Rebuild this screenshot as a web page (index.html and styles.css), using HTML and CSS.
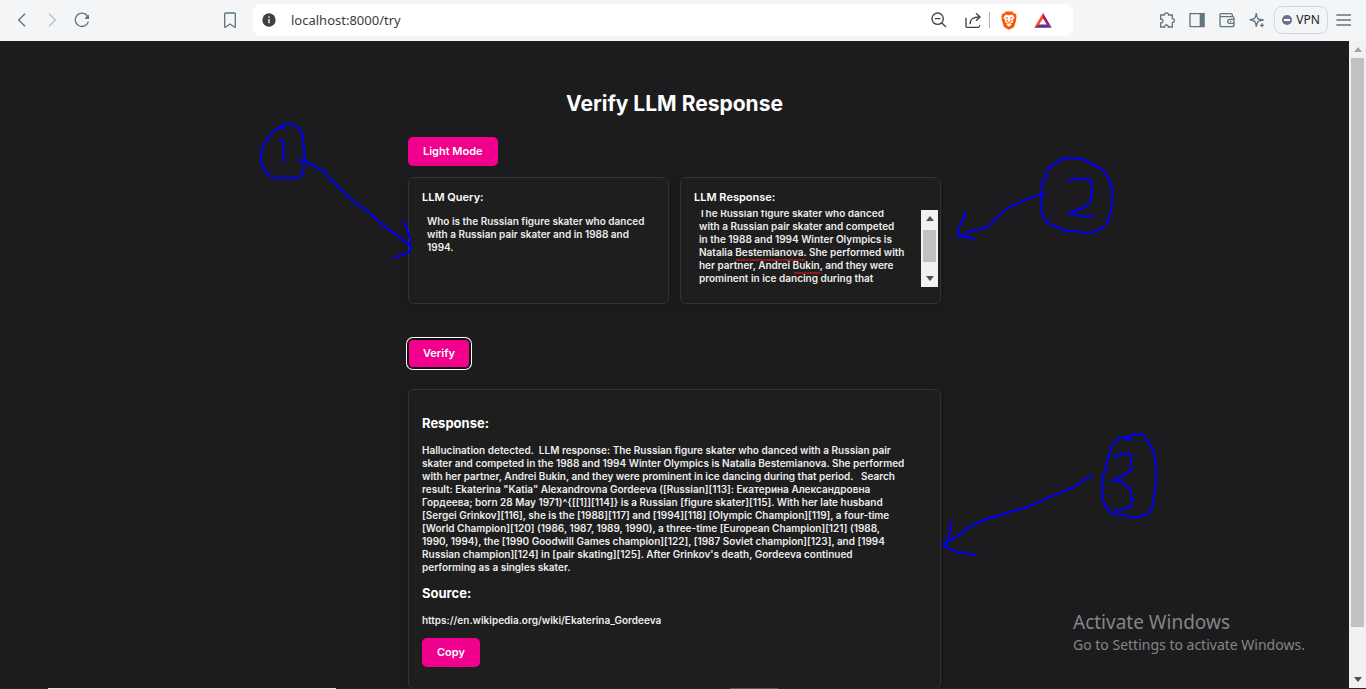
FILE: index.html
```html
<!DOCTYPE html>
<html lang="en">
<head>
<meta charset="utf-8">
<title>Verify LLM Response</title>
<link rel="stylesheet" href="styles.css">
</head>
<body>
<header class="toolbar">
  <button class="tool" aria-label="Back"><svg class="icon" viewBox="0 0 48 48"><path d="M33 5 14 24l19 19"/></svg></button>
  <button class="tool faded" aria-label="Forward"><svg class="icon" viewBox="0 0 48 48"><path d="M15 5l19 19-19 19"/></svg></button>
  <button class="tool" aria-label="Reload"><svg class="icon" viewBox="0 0 48 48"><path d="M43 29A20 20 0 1 1 41 13"/><path class="solid" d="M45 8v13H32l4-7z"/></svg></button>
  <button class="tool bookmark" aria-label="Bookmark"><svg class="icon" viewBox="0 0 48 48"><path d="M8 6q0-3 3-3h26q3 0 3 3v38q0 3-3 1L24 36 11 45q-3 2-3-1z"/></svg></button>
  <div class="address">
    <svg class="icon dark" viewBox="0 0 48 48"><circle class="solid" cx="24" cy="24" r="20"/><path stroke="#fff" stroke-width="4" d="M24 21v13M24 13v4"/></svg>
    <input class="url" type="text" aria-label="Address" value="localhost:8000/try">
    <button class="tool wide dark" aria-label="Zoom out"><svg class="icon" viewBox="0 0 48 48"><circle cx="20" cy="20" r="17"/><path d="M32 32l13 13M12 20h16"/></svg></button>
    <button class="tool wide dark divided" aria-label="Share"><svg class="icon" viewBox="0 0 48 48"><path d="M3 17v26q0 3 3 3h34q4 0 4-6M15 37c0-15 7-22 28-22M33 4l12 11-12 11"/></svg></button>
    <button class="tool wide" aria-label="Shields"><svg class="shield" viewBox="0 0 48 56"><path fill="#ff5500" d="M14 1h20l5 6 5 1 3 8-2 5 1 4-6 20q-1 3-3 4L24 56 11 49q-2-1-3-4L2 25l1-4-2-5 3-8 5-1z"/><path fill="#fff" d="M24 12l10-2 7 9-6 9 1 5-8 4 4 4-8 6-8-6 4-4-8-4 1-5-6-9 7-9z"/><path fill="none" stroke="#ff5500" stroke-width="3" d="M14 19l7 2M34 19l-7 2M20 25l-3 5 7 4 7-4-3-5M24 34v4"/></svg></button>
    <button class="tool wide" aria-label="Rewards"><svg class="bat" viewBox="0 0 54 46"><path fill="#ff4724" d="M27 0 0 45l15-9 12-20z"/><path fill="#9e1f63" d="M27 0l27 45-15-9-12-20z"/><path fill="#662d91" d="M0 45h54l-15-10H15z"/></svg></button>
  </div>
  <button class="tool" aria-label="Extensions"><svg class="icon" viewBox="0 0 48 48"><path d="M6 9h10c-1-8 14-8 13 0h11v11c8-1 8 12 0 12v13H28c1-8-12-8-11 0H5V33c9 1 9-13 0-12V9z"/></svg></button>
  <button class="tool" aria-label="Sidebar"><svg class="icon" viewBox="0 0 48 48"><path d="M3 5h42v39H3z"/><path class="solid" d="M32 4h14v41H32z"/></svg></button>
  <button class="tool" aria-label="Wallet"><svg class="icon" viewBox="0 0 48 48"><path d="M40 14V9q0-4-4-4H7q-4 0-4 4v29q0 6 6 6h30q6 0 6-6V19q0-5-5-5H4M44 22H32q-6 0-6 6t6 6h12M33 28h4"/></svg></button>
  <button class="tool" aria-label="Assistant"><svg class="icon" viewBox="0 0 48 48"><path d="M22 3q2 15 5 17 2 2 17 4-12 1-16 4-4 4-6 16-2-13-5-16-3-2-15-5 12-1 15-4t5-16zM39 34v12M33 40h12"/></svg></button>
  <button class="vpn"><span class="vpn-mark"></span>VPN</button>
  <button class="menu" aria-label="Menu"><svg class="icon" viewBox="0 0 48 48"><path d="M1 9h44M1 24h44M1 39h44"/></svg></button>
</header>

<div class="viewport">
  <main class="page">
    <div class="column">
      <h1 class="title">Verify LLM Response</h1>
      <button class="button">Light Mode</button>
      <div class="pair">
        <section class="card">
          <label class="label" for="query">LLM Query:</label>
          <textarea class="field" id="query" spellcheck="false">Who is the Russian figure skater who danced
with a Russian pair skater and in 1988 and
1994.</textarea>
        </section>
        <section class="card">
          <label class="label" for="answer">LLM Response:</label>
          <div class="scroll-field">
            <textarea class="field" id="answer" spellcheck="false">The Russian figure skater who danced
with a Russian pair skater and competed
in the 1988 and 1994 Winter Olympics is
Natalia Bestemianova. She performed with
her partner, Andrei Bukin, and they were
prominent in ice dancing during that

period.</textarea>
            <div class="scrollbar">
              <svg class="arrow" viewBox="0 0 17 17"><path d="M5 11h8L9 6z"/></svg>
              <div class="thumb thumb-small"></div>
              <svg class="arrow" viewBox="0 0 17 17"><path d="M5 6h8l-4 5z"/></svg>
            </div>
            <span class="squiggle squiggle-a"></span>
            <span class="squiggle squiggle-b"></span>
          </div>
        </section>
      </div>
      <button class="button focused">Verify</button>
      <section class="card result">
        <h2 class="heading">Response:</h2>
        <p class="text">Hallucination detected.&nbsp; LLM response: The Russian figure skater who danced with a Russian pair<br>
          skater and competed in the 1988 and 1994 Winter Olympics is Natalia Bestemianova. She performed<br>
          with her partner, Andrei Bukin, and they were prominent in ice dancing during that period.&nbsp;&nbsp; Search<br>
          result: Ekaterina "Katia" Alexandrovna Gordeeva ([Russian][113]: Екатерина Александровна<br>
          Гордеева; born 28 May 1971)^{[[1]][114]} is a Russian [figure skater][115]. With her late husband<br>
          [Sergei Grinkov][116], she is the [1988][117] and [1994][118] [Olympic Champion][119], a four-time<br>
          [World Champion][120] (1986, 1987, 1989, 1990), a three-time [European Champion][121] (1988,<br>
          1990, 1994), the [1990 Goodwill Games champion][122], [1987 Soviet champion][123], and [1994<br>
          Russian champion][124] in [pair skating][125]. After Grinkov's death, Gordeeva continued<br>
          performing as a singles skater.</p>
        <h2 class="heading">Source:</h2>
        <p class="text">https://en.wikipedia.org/wiki/Ekaterina_Gordeeva</p>
        <button class="button">Copy</button>
      </section>
    </div>
  </main>
  <div class="scrollbar page-scroll">
    <svg class="arrow idle" viewBox="0 0 17 17"><path d="M5 11h8L9 6z"/></svg>
    <div class="thumb thumb-page"></div>
    <svg class="arrow" viewBox="0 0 17 17"><path d="M5 6h8l-4 5z"/></svg>
  </div>
</div>
<footer class="edge"><span class="edge-light"></span><span class="edge-gray"></span></footer>

<aside class="watermark">
  <p class="watermark-title">Activate Windows</p>
  <p class="watermark-text">Go to Settings to activate Windows.</p>
</aside>

<svg class="ink" width="1366" height="689" viewBox="0 0 1366 689" aria-hidden="true">
  <g transform="translate(250 80) scale(.3333)">
    <path d="M101 146 91 140 104 133 128 132 145 145 158 165 161 200 164 235 160 275 150 290 130 295 75 294 58 287 38 262 32 235 35 208 50 178 70 155 95 138M91 179l8 2 2 14v50"/>
    <path d="M141 241h24l23 15 37 20 13 19 20 17 32 34 35 29 40 29 35 32 40 29 36 29M461 425l9 20 6 23 5 12-1 32-14 11-33 9"/>
  </g>
  <g transform="translate(950 150) scale(.3333)">
    <path d="M277 133 276 97 288 80 294 55 338 25 395 26 425 42 440 47 463 67 480 93 487 125 484 170 476 212 455 235 430 248 400 248 340 241 325 232 298 222 281 204 274 180 273 133M353 91l33-5h26l12 9 3 25-5 33-15 17-25 10-27 9 40 9 36 2"/>
    <path d="M285 133h-15l-55 21-50 25-25 26-28 25-15 7-35 5-26 14M46 187l-9 26-10 20-4 26 33 2 18 8"/>
  </g>
  <g transform="translate(930 420) scale(.3333)">
    <path d="M604 60 598 53 590 60 589 51 570 53 551 69 543 84 541 97 535 106 528 145 520 165 516 200 519 240 530 265 545 281 580 286 597 292H625L650 284 666 265 672 225 678 190 679 145 674 105 660 72 640 45 618 43 600 47 591 59M551 112l25-10 20-2 8 10v40l-20 15-28 15-14 1 25 1 34 24 6 36-4 18-30 9-20 1"/>
    <path d="M485 167l-15 7-20 15-20 13-60 25-80 35-60 17-75 24-40 20-20 17-57 33M65 305l-8 46-8 18-6 11 27 10 12 7 25 2 30 6"/>
  </g>
</svg>
<script src="script.js"></script>
</body>
</html>
```
FILE: styles.css
```css
* { box-sizing: border-box; }
body {
  margin: 0;
  height: 100vh;
  display: flex;
  flex-direction: column;
  overflow: hidden;
  background: #1c1c1e;
  color: #ececec;
  font-family: Inter, "Liberation Sans", sans-serif;
  font-size: 11px;
  line-height: 13px;
}
button { font-family: inherit; border: 0; padding: 0; background: none; }

.toolbar {
  flex: none;
  display: flex;
  align-items: center;
  height: 41px;
  padding: 0 14px 1px 7px;
  background: #f3f5f7;
  color: #5f7582;
}
.tool { width: 30px; height: 30px; display: grid; place-items: center; flex: none; color: inherit; }
.tool.faded { color: #b4c0c7; }
.tool.bookmark { margin-left: 118px; }
.tool.wide { width: 34px; }
.dark, .tool.dark { color: #424242; }
.tool.divided { position: relative; margin-right: 2px; }
.divided::after { content: ""; position: absolute; right: 0; top: 7px; width: 1px; height: 16px; background: #b0b0b0; }
.icon { width: 16px; height: 16px; flex: none; fill: none; stroke: currentColor; stroke-width: 4; }
.icon .solid { fill: currentColor; stroke: none; }
.shield { width: 16px; height: 19px; }
.bat { width: 18px; height: 15px; }
.address {
  flex: 1;
  display: flex;
  align-items: center;
  height: 32px;
  margin: 0 79px 0 8px;
  padding: 0 13px 0 8px;
  border-radius: 8px;
  background: #fff;
}
.url {
  flex: 1;
  min-width: 0;
  margin-left: 14px;
  padding: 0;
  border: 0;
  outline: 0;
  background: none;
  color: #3c3c3c;
  font: 13px/20px "Noto Sans", sans-serif;
}
.vpn {
  display: flex;
  align-items: center;
  justify-content: center;
  gap: 4px;
  width: 54px;
  height: 28px;
  margin: 0 8px 0 2px;
  border: 1px solid #cfdae0;
  border-radius: 8px;
  color: #222;
  font: 12px/16px "Noto Sans", sans-serif;
}
.vpn-mark { display: grid; place-items: center; width: 10px; height: 10px; border-radius: 50%; background: #6c6f93; }
.vpn-mark::after { content: ""; width: 6px; height: 2px; background: #fff; }
.menu { width: 16px; height: 16px; color: inherit; }

.viewport { flex: 1; min-height: 0; display: flex; }
.page { flex: 1; overflow: hidden; }
.column { max-width: 533px; margin: 0 auto; padding-top: 49px; }
.title { margin: 0 0 20px; font-size: 21px; line-height: 27px; font-weight: 700; text-align: center; color: #fff; }
.button {
  display: block;
  height: 29px;
  padding: 0 15px;
  border-radius: 5px;
  background: #f0008c;
  color: #fff;
  font-size: 11px;
  line-height: 13px;
  font-weight: 600;
}
.focused { box-shadow: inset 0 0 0 1px #101010, 0 0 0 1px #101010, 0 0 0 2px #fff; }
.pair { display: grid; grid-template-columns: 1fr 1fr; gap: 11px; margin: 11px 0 35px; }
.card {
  padding: 13px;
  border: 1px solid #333;
  border-radius: 6px;
  background: #1e1e1e;
  box-shadow: 0 3px 8px rgba(0, 0, 0, .15);
}
.pair .card { height: 127px; }
.label { display: block; margin-bottom: 6px; font-weight: 600; color: #fff; }
.field {
  display: block;
  width: 100%;
  height: 77px;
  padding: 5px;
  border: 0;
  outline: 0;
  resize: none;
  overflow: hidden;
  background: none;
  color: inherit;
  font: 600 10px/13px Inter, "Liberation Sans", sans-serif;
}
.scroll-field { position: relative; display: flex; margin-right: -11px; }
.scroll-field .field { flex: 1; min-width: 0; }
.squiggle { position: absolute; height: 2px; background: repeating-linear-gradient(135deg, #b01818 0 1px, #5c1a1a 1px 2px); }
.squiggle-a { left: 42px; top: 49px; width: 69px; }
.squiggle-b { left: 100px; top: 62px; width: 28px; }

.scrollbar { flex: none; display: flex; flex-direction: column; align-items: center; width: 17px; background: #f1f1f1; }
.arrow { width: 17px; height: 17px; flex: none; fill: #505050; }
.arrow.idle { fill: #a3a3a3; }
.thumb { width: 13px; background: #c1c1c1; margin-bottom: auto; }
.thumb-small { margin-top: 3px; height: 32px; }
.thumb-page { width: 13px; height: 88%; }

.result { margin-top: 21px; padding: 25px 13px 21px; }
.heading { margin: 0 0 13px; font-size: 13px; line-height: 16px; font-weight: 700; color: #fff; }
.text { margin: 0 0 11px; font-size: 10px; font-weight: 600; }

.edge { flex: none; display: flex; height: 1px; background: #29261c; }
.edge-light { width: 288px; margin-left: 48px; background: #e8e0e2; }
.edge-gray { width: 48px; margin-left: 394px; background: #5a5658; }

.watermark {
  position: absolute;
  right: 57px;
  bottom: 34px;
  width: 236px;
  color: #858585;
  font-family: "Noto Sans", sans-serif;
  white-space: nowrap;
}
.watermark p { margin: 0; }
.watermark-title { font-size: 19px; line-height: 26px; }
.watermark-text { font-size: 14px; line-height: 20px; }

.ink { position: absolute; left: 0; top: 0; pointer-events: none; fill: none; stroke: #0000f8; stroke-width: 6; stroke-linejoin: round; stroke-linecap: round; }
```
FILE: script.js
```js
document.getElementById("answer").scrollTop = 8;
```
